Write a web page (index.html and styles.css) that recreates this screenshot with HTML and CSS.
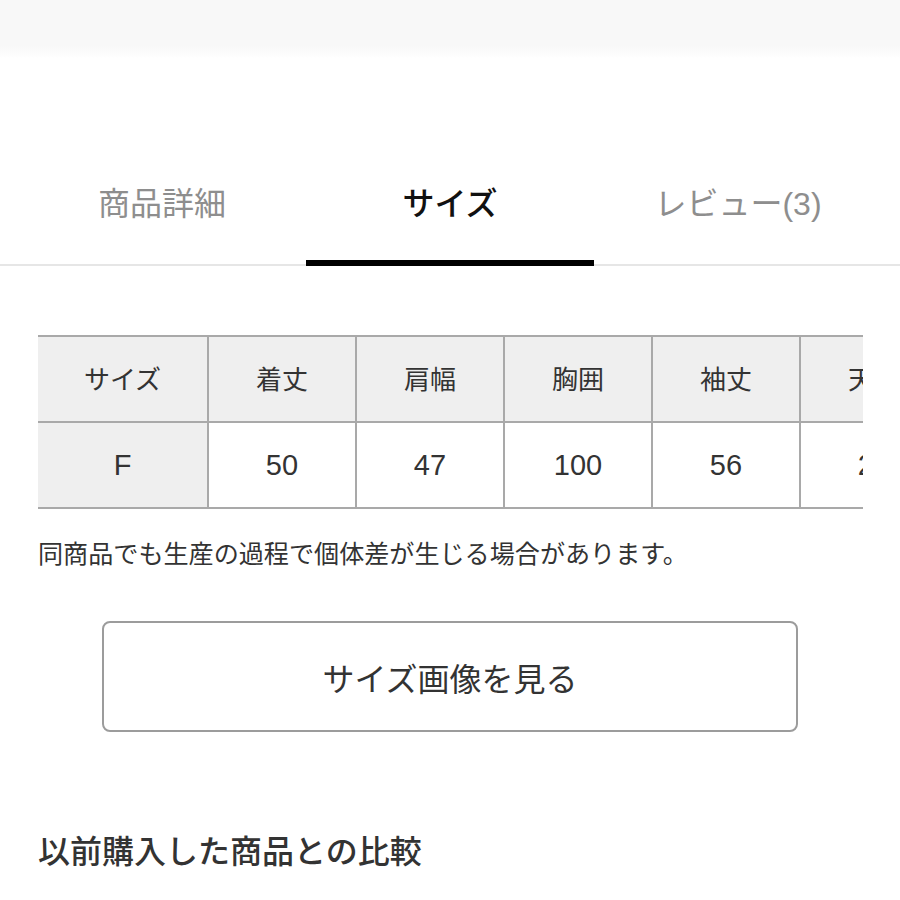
FILE: index.html
```html
<!DOCTYPE html>
<html lang="ja">
<head>
<meta charset="utf-8">
<link rel="stylesheet" href="styles.css">
</head>
<body>
<div class="topbar"></div>
<nav class="tabs">
  <div class="tab">商品詳細</div>
  <div class="tab active">サイズ</div>
  <div class="tab">レビュー(3)</div>
</nav>
<div class="table-wrap">
  <table class="size-table">
    <colgroup>
      <col class="c-first"><col class="c"><col class="c"><col class="c"><col class="c"><col class="c"><col class="c">
    </colgroup>
    <tr class="head">
      <td class="first">サイズ</td><td>着丈</td><td>肩幅</td><td>胸囲</td><td>袖丈</td><td>天地</td><td>裄丈</td>
    </tr>
    <tr class="vals">
      <td class="first">F</td><td>50</td><td>47</td><td>100</td><td>56</td><td>24</td><td>78</td>
    </tr>
  </table>
</div>
<p class="note">同商品でも生産の過程で個体差が生じる場合があります。</p>
<div class="btn">サイズ画像を見る</div>
<h2 class="compare">以前購入した商品との比較</h2>
</body>
</html>
```
FILE: styles.css
```css
html, body {
  margin: 0;
  padding: 0;
  background: #fff;
}
body {
  width: 900px;
  height: 900px;
  overflow: hidden;
  font-family: "Liberation Sans", "Noto Sans CJK JP", sans-serif;
  color: #333;
}
.topbar {
  height: 58px;
  background: linear-gradient(to bottom, #f8f8f8 0, #f8f8f8 46px, #fcfcfc 54px, #fff 58px);
}
.tabs {
  display: flex;
  padding: 0 18px;
  margin-top: 126px;
  border-bottom: 2px solid #e6e6e6;
}
.tab {
  width: 288px;
  text-align: center;
  font-size: 32px;
  line-height: 40px;
  color: #8e8e8e;
  padding-bottom: 36px;
  margin-bottom: -2px;
  border-bottom: 6px solid transparent;
}
.tab.active {
  color: #111;
  font-weight: 500;
  border-bottom-color: #000;
}
.table-wrap {
  margin: 69px 0 0 38px;
  width: 825px;
  overflow: hidden;
}
.size-table {
  border-collapse: collapse;
  table-layout: fixed;
  width: 1058px;
}
.c-first { width: 170px; }
.c { width: 148px; }
.size-table td {
  border: 2px solid #a9a9a9;
  height: 84px;
  padding: 0;
  text-align: center;
  font-size: 26px;
  color: #333;
}
.size-table tr.head td {
  background: #efefef;
  padding-bottom: 4px;
  height: 80px;
}
.size-table tr.vals td {
  font-size: 29px;
}
.size-table td.first {
  border-left: none;
  background: #efefef;
}
.note {
  margin: 29px 0 0 38px;
  font-size: 25.1px;
  line-height: 32px;
  color: #333;
}
.btn {
  margin: 51px 0 0 102px;
  width: 692px;
  height: 107px;
  border: 2px solid #9c9c9c;
  border-radius: 8px;
  display: flex;
  align-items: center;
  justify-content: center;
  font-size: 32px;
  color: #333;
}
.compare {
  margin: 100px 0 0 38px;
  font-size: 32px;
  line-height: 40px;
  font-weight: 500;
  color: #333;
}
```
